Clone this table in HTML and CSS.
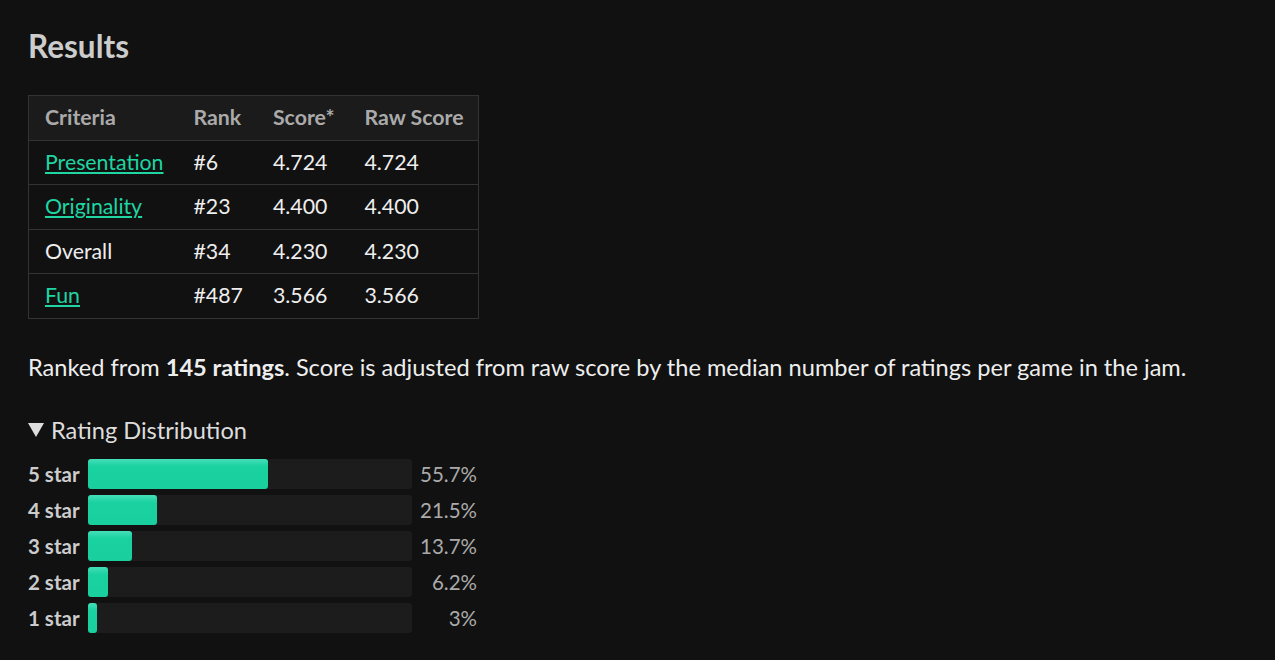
FILE: index.html
```html
<!DOCTYPE html>
<html>
<head>
<meta charset="utf-8">
<link rel="stylesheet" href="styles.css">
</head>
<body>
<section class="results">
  <h2 class="title">Results</h2>
  <table class="ranks">
    <thead>
      <tr><th>Criteria</th><th>Rank</th><th>Score*</th><th>Raw Score</th></tr>
    </thead>
    <tbody>
      <tr><td><a href="#">Presentation</a></td><td>#6</td><td>4.724</td><td>4.724</td></tr>
      <tr><td><a href="#">Originality</a></td><td>#23</td><td>4.400</td><td>4.400</td></tr>
      <tr><td>Overall</td><td>#34</td><td>4.230</td><td>4.230</td></tr>
      <tr><td><a href="#">Fun</a></td><td>#487</td><td>3.566</td><td>3.566</td></tr>
    </tbody>
  </table>
  <p class="note">Ranked from <strong>145 ratings</strong>. Score is adjusted from raw score by the median number of ratings per game in the jam.</p>
  <details class="dist" open>
    <summary><span class="tri"></span>Rating Distribution</summary>
    <div class="bars">
      <div class="label">5 star</div><div class="track"><div class="fill" style="width:55.7%"></div></div><div class="pct">55.7%</div>
      <div class="label">4 star</div><div class="track"><div class="fill" style="width:21.5%"></div></div><div class="pct">21.5%</div>
      <div class="label">3 star</div><div class="track"><div class="fill" style="width:13.7%"></div></div><div class="pct">13.7%</div>
      <div class="label">2 star</div><div class="track"><div class="fill" style="width:6.2%"></div></div><div class="pct">6.2%</div>
      <div class="label">1 star</div><div class="track"><div class="fill" style="width:3%"></div></div><div class="pct">3%</div>
    </div>
  </details>
</section>
</body>
</html>
```
FILE: styles.css
```css
html, body {
  margin: 0;
  background: #111111;
}
body {
  font-family: Lato, "Open Sans", sans-serif;
  color: #dddddd;
  font-size: 23.6px;
}
.results {
  padding: 28px 28px 0 28px;
}
.title {
  margin: 0;
  font-size: 31.5px;
  line-height: 36px;
  font-weight: 700;
  color: #cccccc;
}
.ranks {
  margin-top: 31px;
  border-collapse: collapse;
  border: 1px solid #333333;
  font-size: 21.3px;
}
.ranks th, .ranks td {
  padding: 10px 14px 10px 16px;
  line-height: 23.5px;
  text-align: left;
  white-space: nowrap;
}
.ranks th {
  background: #1b1b1b;
  color: #aaaaaa;
  font-weight: 700;
}
.ranks td {
  border-top: 1px solid #333333;
  color: #eeeeee;
}
.ranks a {
  color: #1fd5a2;
  text-decoration: underline;
}
.note {
  margin: 31px 0 0;
  line-height: 34px;
  color: #eeeeee;
}
.note strong {
  font-weight: 700;
}
.dist {
  margin-top: 29px;
}
.dist summary {
  list-style: none;
  line-height: 34px;
  color: #dddddd;
  cursor: pointer;
  display: flex;
  align-items: center;
}
.dist summary::-webkit-details-marker {
  display: none;
}
.tri {
  width: 0;
  height: 0;
  border-left: 8px solid transparent;
  border-right: 8px solid transparent;
  border-top: 14px solid #dddddd;
  margin: 1px 7px 0 0;
}
.bars {
  margin-top: 12px;
  width: 449px;
  display: grid;
  grid-template-columns: max-content 1fr 57px;
  column-gap: 8px;
  row-gap: 6px;
  align-items: center;
}
.label {
  font-size: 20.5px;
  font-weight: 700;
  color: #cccccc;
  line-height: 30px;
}
.track {
  height: 30px;
  background: #1c1c1c;
  border-radius: 3px;
}
.fill {
  height: 100%;
  border-radius: 3px;
  background: linear-gradient(#45dfb9, #1ad1a0 25%, #18cf9d);
}
.pct {
  text-align: right;
  color: #aaaaaa;
  font-size: 20.5px;
  line-height: 30px;
}
```
